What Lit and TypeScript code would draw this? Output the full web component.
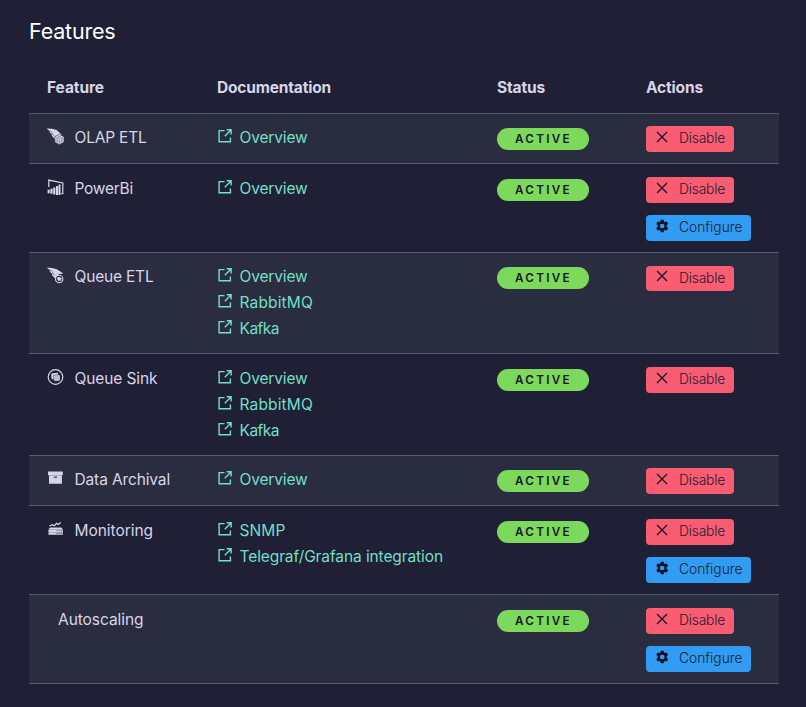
import { LitElement, html, svg, css } from "lit";
import { customElement, property } from "lit/decorators.js";

const icons: Record<string, unknown> = {
  olap: svg`<path d="M-.5 .4 5 .8 9.6 2 14.6 6.4 8.6 12.2 4.6 7.6 5 6.6 2.2 4 3.2 3.6Z" fill="currentColor"/><path d="M3.4 2.6 7.4 8.6" stroke="#2a2c3f" stroke-width=".5"/><path d="m12.4 6.2 4.6 2.6v5.2l-4.6 2.7-4.6-2.7V8.8Z" fill="currentColor" stroke="#2a2c3f" stroke-width=".5"/><path d="m7.8 8.8 4.6 2.6L17 8.8M12.4 11.4v5.2M10.1 7.5l4.6 2.6v5M14.7 7.5l-4.6 2.6v5M7.8 11.4l4.6 2.6 4.6-2.6" fill="none" stroke="#2a2c3f" stroke-width=".3"/>`,
  powerbi: svg`<path d="M1.8 8V1.1L15.8 4v10.6h-1.6" fill="none" stroke="currentColor" stroke-width="1.2"/><path d="M.6 10.8h2.2v3.4H.6zM3.4 9.8h2.2v5H3.4zM6.2 8.4h2.2v7H6.2zM9 7H11.1V16H9zM11.5 5.4h2V16h-2z" fill="currentColor"/>`,
  queueEtl: svg`<path d="M-.2 .6 5 1 9.8 2.2 16.4 6.6 12 7 8.4 11.8 5 8.2 5.4 7 2.4 4.4 3.6 4Z" fill="currentColor"/><path d="M3.4 2.6 7.6 8.4" stroke="#2a2c3f" stroke-width=".5"/><circle cx="12.2" cy="12" r="3.7" fill="#2a2c3f" stroke="currentColor" stroke-width="1.1"/><path d="m10.2 10.3 2.9-.3 1.1 1.3v2.2l-2.6.4-1.4-1.3Z" fill="currentColor"/>`,
  queueSink: svg`<circle cx="8.5" cy="8" r="7.3" fill="none" stroke="currentColor" stroke-width="1.2"/><path d="m4.4 4.4 6-.6 1.2 1.8-5 .5v4.7l-2.2-1.4Z" fill="currentColor"/><path d="m7 6.3 5.2-.4.8 1v4.5l-5 .8-1-1.3Z" fill="currentColor" opacity=".85"/>`,
  archive: svg`<path d="M1 1.6h14.8v3.6H1zM2 5.5h12.9v8.2H2z" fill="currentColor"/><path d="M6.8 7.2h3.3" stroke="#2a2c3f" stroke-width="1.1"/>`,
  monitoring: svg`<path d="m2.4 5 3-1.4 2.2 1.1L9.6 2.4l1.8 1.1 2.2-2" fill="none" stroke="currentColor" stroke-width="1.25"/><path d="M3 6.4h11.4l1.3 1.9H1.6zM1.5 8.6h14.3v2.4H1.5zM1.5 11.3h14.3v2.5H1.5z" fill="currentColor"/><path d="M9.6 9.8h1M11.6 9.8h1M13.6 9.8h1M9.6 12.5h1M11.6 12.5h1M13.6 12.5h1" stroke="#1f2035" stroke-width=".8"/>`,
  external: svg`<path d="M7.5 2.6H2.1v11.2h11.3V9.4M9.7 1.8h4.4v4.6M13.9 2.1 7.8 8.3" fill="none" stroke="currentColor" stroke-width="1.4"/>`,
  cancel: svg`<path d="m3 3 10 10M13 3 3 13" fill="none" stroke="currentColor" stroke-width="1.25"/>`,
  gear: svg`<path fill="currentColor" fill-rule="evenodd" transform="translate(1 .8) scale(.9)" d="M6.4 1h3.2l.4 2 1.1.65 1.95-.7 1.6 2.75L13.1 7v2l1.55 1.3-1.6 2.75-1.95-.7L10 13l-.4 2H6.4L6 13l-1.1-.65-1.95.7-1.6-2.75L2.9 9V7L1.35 5.7l1.6-2.75 1.95.7L6 3ZM8 5.4a2.6 2.6 0 1 0 0 5.2 2.6 2.6 0 0 0 0-5.2Z"/>`,
};

const icon = (name: string, cls: string) =>
  html`<svg class=${cls} viewBox="0 0 17 17">${icons[name]}</svg>`;

const FAMILY = 'Inter, "Noto Sans", sans-serif';
const ctx = document.createElement("canvas").getContext("2d")!;

/** A single-line label tracked so that it occupies a given width. */
const label = (text: string, width: number, size: number, weight: number) => {
  ctx.font = `${weight} ${size}px ${FAMILY}`;
  const tracking = (width - ctx.measureText(text).width) / text.length;
  return html`<span style="letter-spacing:${tracking.toFixed(3)}px">${text}</span>`;
};

type Label = [text: string, width: number];
interface Feature {
  name: Label;
  icon?: string;
  docs: Label[];
  configurable?: boolean;
  height: number;
  pad: number;
}

const overview: Label = ["Overview", 68];
const rabbit: Label = ["RabbitMQ", 73.5];
const kafka: Label = ["Kafka", 39.5];

const features: Feature[] = [
  { name: ["OLAP ETL", 72], icon: "olap", docs: [overview], height: 50, pad: 12 },
  { name: ["PowerBi", 58.5], icon: "powerbi", docs: [overview], configurable: true, height: 89, pad: 13 },
  { name: ["Queue ETL", 79], icon: "queueEtl", docs: [overview, rabbit, kafka], height: 101, pad: 12 },
  { name: ["Queue Sink", 83], icon: "queueSink", docs: [overview, rabbit, kafka], height: 102, pad: 13 },
  { name: ["Data Archival", 95.5], icon: "archive", docs: [overview], height: 50, pad: 12 },
  { name: ["Monitoring", 78.5], icon: "monitoring", docs: [["SNMP", 46], ["Telegraf/Grafana integration", 203.5]], configurable: true, height: 89, pad: 13 },
  { name: ["Autoscaling", 85.5], docs: [], configurable: true, height: 89, pad: 13 },
];

@customElement("feature-row")
class FeatureRow extends LitElement {
  @property({ attribute: false }) feature!: Feature;

  static styles = css`
    :host { display: block; color: #d9d5e8; }
    .row {
      display: grid;
      grid-template-columns: 170px 280px 149px 1fr;
      box-sizing: border-box;
      border-bottom: 1px solid #56587a;
      white-space: nowrap;
    }
    .cell { padding-left: 18px; }
    .line { display: flex; height: 26px; line-height: 24px; align-items: flex-start; }
    .plain { padding-left: 11px; }
    .mark { width: 17px; height: 17px; margin: 2px 10.5px 0 0; flex: none; overflow: visible; }
    .doc { color: #74dfc8; text-decoration: none; }
    .ext { width: 17px; height: 17px; margin: 2px 5.5px 0 0; flex: none; }
    .badge {
      display: flex; width: 92px; height: 22px; margin-top: 2px; box-sizing: border-box; padding-left: 18px;
      border-radius: 11px; background: #7cd95b; color: #161829;
      font-size: 11.7px; font-weight: 600; line-height: 23px;
    }
    .actions { display: flex; flex-direction: column; align-items: flex-start; gap: 12px; }
    .btn {
      display: flex; height: 26px; padding: 0 9px 0 8px; box-sizing: border-box; border: 0; border-radius: 4px;
      background: #fa5d72; color: #1b1c30; font: 300 13.8px/25px Inter, "Noto Sans", sans-serif;
    }
    .disable { width: 88px; }
    .configure { width: 105px; background: #309cf4; }
    .tall .btn { height: 25px; margin-top: 1px; }
    .glyph { width: 17px; height: 17px; margin: 3px 8px 0 0; flex: none; color: #11132a; }
    .tall .glyph { margin-top: 2px; }
  `;

  render() {
    const f = this.feature;
    return html`
      <div class="row" style="height:${f.height}px;padding-top:${f.pad}px">
        <div class="cell">
          <div class="line ${f.icon ? "" : "plain"}">
            ${f.icon ? icon(f.icon, "mark") : ""}${label(f.name[0], f.name[1], 15.5, 400)}
          </div>
        </div>
        <div class="cell">
          ${f.docs.map((d) => html`<a class="line doc">${icon("external", "ext")}${label(d[0], d[1], 15.5, 400)}</a>`)}
        </div>
        <div class="cell"><div class="badge">${label("ACTIVE", 57, 11.7, 600)}</div></div>
        <div class="cell actions ${f.height === 101 ? "tall" : ""}">
          <button class="btn disable">${icon("cancel", "glyph")}${label("Disable", 46, 13.8, 300)}</button>
          ${f.configurable
            ? html`<button class="btn configure">${icon("gear", "glyph")}${label("Configure", 63.5, 13.8, 300)}</button>`
            : ""}
        </div>
      </div>`;
  }
}

@customElement("app-root")
class AppRoot extends LitElement {
  static styles = css`
    :host {
      display: block; box-sizing: border-box; height: 707px; padding: 17px 27px 0 29px;
      background: #1f2035; color: #d9d5e8; font: 400 15.5px/26px Inter, "Noto Sans", sans-serif;
    }
    .title { margin: 0; height: 30px; line-height: 28px; font-size: 21.5px; font-weight: 400; color: #fff; }
    .head {
      display: grid; grid-template-columns: 170px 280px 149px 1fr; box-sizing: border-box;
      height: 67px; padding-top: 28px; border-bottom: 1px solid #56587a; font-weight: 700;
      white-space: nowrap;
    }
    .th { padding-left: 18px; }
    .striped { background: #2a2c3f; }
  `;

  render() {
    const heads: Label[] = [["Feature", 57], ["Documentation", 114], ["Status", 48], ["Actions", 57]];
    return html`
      <h1 class="title">${label("Features", 86.5, 21.5, 400)}</h1>
      <div class="head">${heads.map((h) => html`<div class="th">${label(h[0], h[1], 15.5, 700)}</div>`)}</div>
      ${features.map((f, i) => html`<feature-row class=${i % 2 ? "" : "striped"} .feature=${f}></feature-row>`)}
    `;
  }
}
